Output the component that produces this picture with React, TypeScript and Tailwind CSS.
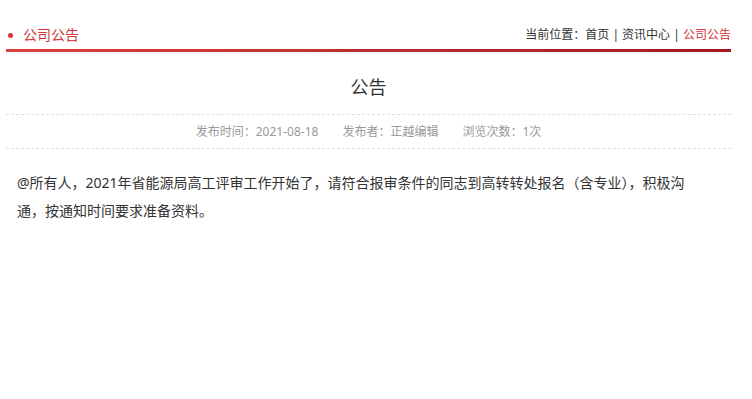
import React from "react";

export default function App() {
  const font = {
    fontFamily: '"Noto Sans", "Noto Sans CJK SC", sans-serif',
  };
  return (
    <div className="w-[752px] h-[399px] bg-white overflow-hidden" style={font}>
      <div className="ml-[6px] w-[725px]">
        <div className="flex items-end justify-between h-[49px] pb-[4px]">
          <div className="flex items-center h-[20px] text-[14px] text-[#d2353a] leading-[20px]">
            <span className="inline-block w-[5px] h-[5px] rounded-full bg-[#d2353a] ml-[2px] mr-[10px]" />
            <span>公司公告</span>
          </div>
          <div className="text-[12px] leading-[20px] text-[#333]">
            当前位置：首页 | 资讯中心 | <span className="text-[#d2353a]">公司公告</span>
          </div>
        </div>
        <div className="h-[3px] bg-gradient-to-r from-[#d9423f] to-[#a3161b]" />
        <div className="mt-[22px] text-center text-[18px] leading-[26px] text-[#333]">公告</div>
        <div className="mt-[14px] border-t border-dashed border-[#e0e0e0]" />
        <div className="h-[33px] flex items-center justify-center gap-[24px] text-[12px] text-[#999]">
          <span>发布时间：2021-08-18</span>
          <span>发布者：正越编辑</span>
          <span>浏览次数：1次</span>
        </div>
        <div className="border-t border-dashed border-[#e0e0e0]" />
        <div className="pt-[20px] pl-[11px] pr-[24px] text-[14px] leading-[28px] text-[#333]">
          @所有人，2021年省能源局高工评审工作开始了，请符合报审条件的同志到高转转处报名（含专业），积极沟通，按通知时间要求准备资料。
        </div>
      </div>
    </div>
  );
}
